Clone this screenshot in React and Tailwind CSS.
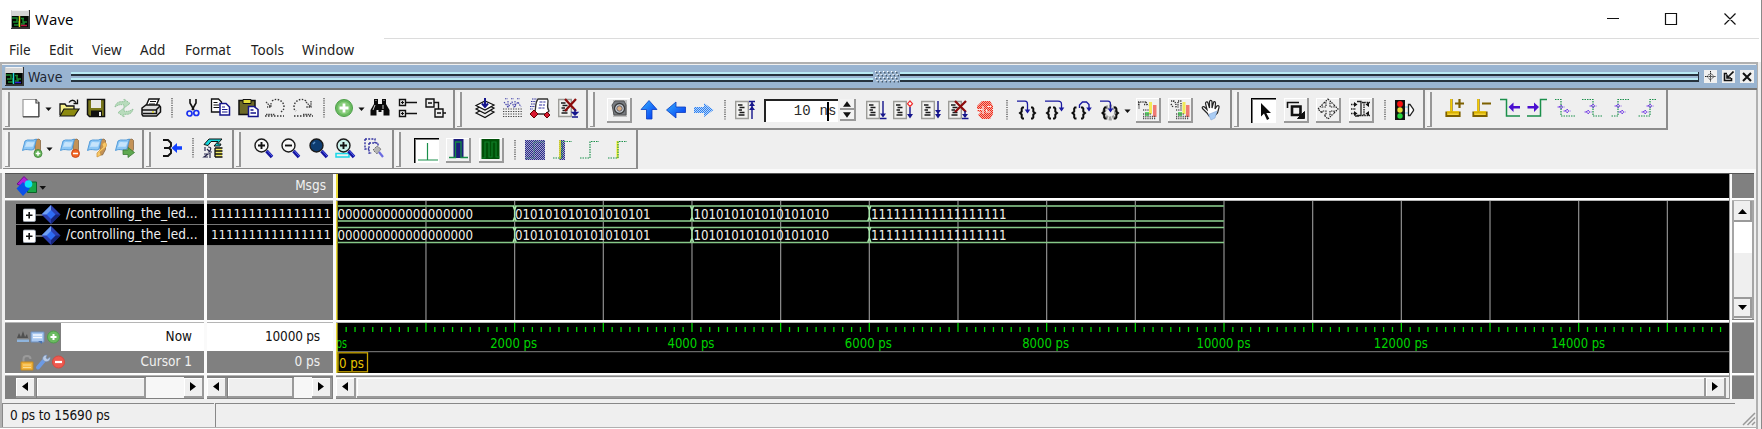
import React from "react";

/* ---------- primitives ---------- */

function Ico({ children }) {
  return (
    <span className="flex w-[27.5px] shrink-0 justify-center">
      <svg width="20" height="20" viewBox="0 0 20 20" fill="none" className="overflow-visible">
        {children}
      </svg>
    </span>
  );
}

function Btn({ children, pressed = false, narrow = false }) {
  return (
    <span className={narrow ? "flex w-[31px] shrink-0 justify-center" : "flex w-[32.5px] shrink-0 justify-center"}>
      <span
        className={
          pressed
            ? "flex h-[25px] w-[25px] items-center justify-center border-l border-t border-black bg-white shadow-[inset_1px_1px_0_#777]"
            : "flex h-[25px] w-[25px] items-center justify-center border-b-2 border-r-2 border-[#9a9a9a] bg-[#f0f0f0] shadow-[inset_1px_1px_0_#fff]"
        }
      >
        <svg width="20" height="20" viewBox="0 0 20 20" fill="none" className="overflow-visible">
          {children}
        </svg>
      </span>
    </span>
  );
}

function Sep() {
  return (
    <span className="flex w-[14px] shrink-0 justify-center">
      <svg width="2" height="20" viewBox="0 0 2 20">
        <path d="M1 0v20" stroke="#444" strokeWidth="1.200" strokeDasharray="1.200 1.100" />
      </svg>
    </span>
  );
}

function Drop({ wide = false }) {
  return (
    <span className={wide ? "flex w-[10.5px] shrink-0" : "flex w-[8.5px] shrink-0"}>
      <svg width="7" height="4.5" viewBox="0 0 8 5" className="mt-0.5">
        <path d="M0.5 0.5h7L4 4.5z" fill="#111" />
      </svg>
    </span>
  );
}

function Bar({ className, children }) {
  return (
    <div className={"flex h-[40px] shrink-0 items-start border-b-2 border-r-2 border-[#8c8c8c] bg-[#efefef] " + className}>
      <span className="ml-[2px] mt-[2px] h-[35px] w-[5px] shrink-0 border-b border-r-2 border-[#979797] bg-[#f5f5f5]" />
      {children}
    </div>
  );
}

function WaveLogo({ c = "#e0e020", d = "#c01040" }) {
  return (
    <svg width="19" height="19" viewBox="0 0 19 19" className="shrink-0">
      <rect width="19" height="19" fill="#333" />
      <rect width="18" height="6" fill="#d4d4d4" />
      <rect width="17" height="1" fill="#f4f4f4" />
      <path d="M0 0v18" stroke="#ccc" strokeWidth="1.500" />
      <rect x="1" y="6" width="16" height="11" fill="#020702" />
      <path d="M1 8h5v4H2M3 15h5v-4M10 8.500h3M12 8v4h4M10 14h3v-2" stroke="#188a30" strokeWidth="1.500" fill="none" />
      <path d="M8.500 6v11" stroke={c} strokeWidth="1.500" />
      <path d="M10 15.500h6" stroke={d} strokeWidth="1.500" />
    </svg>
  );
}

/* ---------- icon drawings ---------- */

const Page = () => (
  <>
    <path d="M.7 1.500h12.600v17H.7z" fill="#f2f2f0" stroke="#9c9c98" strokeWidth="1.400" />
    <path d="M3 5h4.500M4.500 7.500h5M3.500 10h3.500M4.500 12.500h5M3.500 15h6" stroke="#1a1a1a" strokeWidth="1.300" />
  </>
);

const BlueTag = ({ children }) => (
  <>
    <path d="M12.500 2l4.500-1 1.500 1.500v9l-3 5.500h-2z" fill="#c49256" stroke="#7b5b38" strokeWidth=".7" />
    <path d="M3 3c3-2.500 7 .5 11.500-2L12 11c-3 2.500-7-1-11.500 1.500z" fill="#8ec8f6" stroke="#4794d6" strokeWidth=".9" />
    <path d="M4.500 4.500c2.500-1.500 5 .5 8-.5l-1.500 4.500c-3 1-5-.5-8 .5z" fill="#c6e4fb" />
    {children}
  </>
);

const Lens = ({ fill = "#f7f7f7", children }) => (
  <>
    <path d="M12.500 13l5.500 6" stroke="#1414a0" strokeWidth="3.400" />
    <path d="M13.500 13l5 5.500" stroke="#5a6af0" strokeWidth="1" />
    <circle cx="7.500" cy="7.500" r="6.500" fill={fill} stroke="#1a1a1a" strokeWidth="1.400" />
    {children}
  </>
);

const Gates = ({ d, arrows }) => (
  <>
    <path d={d} stroke="#1b8f4b" strokeWidth="1.200" strokeDasharray="1.500 1" />
    {arrows.map(([x, y]) => (
      <path key={x + "-" + y} d={`M${x - 3.5} ${y}h7M${x} ${y - 2}l2 2-2 2-2-2z`} stroke="#7a45e6" strokeWidth="1" strokeDasharray="1.500 .6" />
    ))}
  </>
);

const OpenBrace = ({ x }) => (
  <path d={`M${x + 4} 7.500h-1.500l-.8 1v3l-1.700 1.500 1.700 1.500v3l.8 1h1.500`} stroke="#0c0c0c" strokeWidth="2" />
);
const CloseBrace = ({ x }) => (
  <path d={`M${x} 7.500h1.500l.8 1v3l1.700 1.500-1.700 1.500v3l-.8 1h-1.500`} stroke="#0c0c0c" strokeWidth="2" />
);

function Hatch() {
  return (
    <defs>
      <pattern id="navyHatch" width="2" height="2" patternUnits="userSpaceOnUse">
        <rect width="2" height="2" fill="#a4a4cc" />
        <rect width="1" height="1" fill="#2c2c88" />
        <rect x="1" y="1" width="1" height="1" fill="#2c2c88" />
      </pattern>
      <pattern id="blueHatch" width="2" height="2" patternUnits="userSpaceOnUse">
        <rect width="2" height="2" fill="#b4d4fa" />
        <rect width="1" height="1" fill="#2f80f0" />
        <rect x="1" y="1" width="1" height="1" fill="#2f80f0" />
      </pattern>
      <pattern id="redHatch" width="2" height="2" patternUnits="userSpaceOnUse">
        <rect width="2" height="2" fill="#f6aaa0" />
        <rect width="1" height="1" fill="#ee2a1a" />
        <rect x="1" y="1" width="1" height="1" fill="#ee2a1a" />
      </pattern>
      <pattern id="grayHatch" width="2" height="2" patternUnits="userSpaceOnUse">
        <rect width="1" height="1" fill="#555" />
        <rect x="1" y="1" width="1" height="1" fill="#555" />
      </pattern>
      <linearGradient id="arrowBlue" x1="0" y1="0" x2="1" y2="1">
        <stop offset="0" stopColor="#35b4ff" />
        <stop offset="1" stopColor="#0030f0" />
      </linearGradient>
    </defs>
  );
}

/* ---------- toolbars ---------- */

function FileBar() {
  return (
    <Bar className="w-[452px]">
      <div className="ml-[7px] flex h-[36px] items-center">
        <Ico>
          <path d="M2 1.500h13l3 3V18.500H2z" fill="#fff" stroke="#999" strokeWidth="1.200" />
          <path d="M15 1v4h3M17.800 4v15M2 18.800h16" stroke="#444" strokeWidth="1.200" />
        </Ico>
        <Drop wide />
        <Ico>
          <path d="M1 17V6h5l1.500 2H15v3" fill="#f6f08a" stroke="#111" strokeWidth="1.300" />
          <path d="M1 18l4-7h15l-4.500 7z" fill="#8c8a10" stroke="#111" strokeWidth="1.200" />
          <path d="M10 4.500c2-3 5-3 7 0M18.500 1.500v4h-4" stroke="#111" strokeWidth="1.300" />
        </Ico>
        <Ico>
          <path d="M1.500 1.500h17v17h-15l-2-2z" fill="#77751a" stroke="#111" strokeWidth="1.500" />
          <path d="M5 2h10v8H5z" fill="#e8e8e8" />
          <path d="M5 12.500h11v6H5z" fill="#111" />
          <path d="M13 14h2v4h-2z" fill="#eee" />
        </Ico>
        <Ico>
          <path d="M1 9c1-5 5-6 9-5V1l6 4.500L10 10V7C6 6 4 7 1 9zM19 11c-1 5-5 6-9 5v3l-6-4.500 6-4.500v3c4 1 6 0 9-2z" fill="#b8dcbc" stroke="#8fc098" strokeWidth="1" strokeDasharray="1.500 .8" />
        </Ico>
        <Ico>
          <path d="M5 8l3-7h10l-3 7z" fill="#fff" stroke="#111" strokeWidth="1.400" />
          <path d="M9 3.500h6M8 6h6" stroke="#111" strokeWidth="1.200" />
          <path d="M1 10l4-3h13l1.500 2v5l-4 4H2l-1-1.500z" fill="#ddd" stroke="#111" strokeWidth="1.500" />
          <path d="M1 12h14l4-4M2 15.500h13.500v-4" stroke="#111" strokeWidth="1.500" />
          <path d="M11 14h2" stroke="#d8d020" strokeWidth="1.300" />
        </Ico>
        <Sep />
        <Ico>
          <path d="M7 1v4l4 7M13 1v4L9 12" stroke="#111" strokeWidth="1.600" />
          <circle cx="6.500" cy="15.500" r="2.500" stroke="#1a30f0" strokeWidth="1.700" />
          <circle cx="13.300" cy="15" r="2.500" stroke="#1a30f0" strokeWidth="1.700" />
        </Ico>
        <Ico>
          <path d="M1.500 1h7l3 3v10h-10z" fill="#fff" stroke="#111" strokeWidth="1.300" />
          <path d="M3.500 4.500h4M3.500 7h6M3.500 9.500h6" stroke="#111" strokeWidth="1.200" />
          <path d="M10 5.500h6l3.500 3.500v8H10z" fill="#fff" stroke="#15158c" strokeWidth="1.500" />
          <path d="M12 9h3M12 11.500h5.500M12 14h5.500" stroke="#15158c" strokeWidth="1.200" />
        </Ico>
        <Ico>
          <path d="M1 2.500h16v14H1z" fill="#6c6926" stroke="#111" strokeWidth="1.500" />
          <path d="M5 1.500h8v4H5z" fill="#e5df3c" stroke="#111" strokeWidth="1" />
          <path d="M10.500 8.500h5.500l4 3v7h-9.500z" fill="#fff" stroke="#15158c" strokeWidth="1.500" />
          <path d="M12.500 12h3M12.500 15h5.500" stroke="#15158c" strokeWidth="1.300" />
        </Ico>
        <Ico>
          <path d="M0 18h19M7 3C12-1 19 3 19 9c0 3-2 4-4 6" stroke="#333" strokeWidth="1.400" strokeDasharray="1.500 1.500" />
          <path d="M1 4l5 5M6 5v4H2M1 16.500h9" stroke="#444" strokeWidth="1.300" strokeDasharray="1.500 .8" />
        </Ico>
        <Ico>
          <path d="M1 18h19M13 3C8-1 1 3 1 9c0 3 1 3 2 4" stroke="#333" strokeWidth="1.400" strokeDasharray="1.500 1.500" />
          <path d="M18 3v6h-5M13 4l5 5M10 16.500h9" stroke="#444" strokeWidth="1.300" strokeDasharray="1.500 .8" />
        </Ico>
        <Sep />
        <Ico>
          <circle cx="10" cy="10" r="8.500" fill="#6bbb61" stroke="#4c9e48" />
          <circle cx="10" cy="10" r="6.200" fill="#87cc7a" />
          <path d="M10 5.500v9M5.500 10h9" stroke="#fff" strokeWidth="2.800" />
        </Ico>
        <Drop />
        <Ico>
          <path d="M4 1h4v5h4V1h4v5l3.500 6v5.500h-6V12h-2v2h-3v-2h-2v5.500h-6V12L4 6z" fill="#0a0a0a" />
          <path d="M5 7l-2 5M13 7v4M5.500 2.500h1M13.500 2.500h1" stroke="#ccc" strokeWidth="1" />
        </Ico>
        <Ico>
          <path d="M1.500 1.500h6v6h-6zM1.500 12.500h6v6h-6zM8 4.500h11M8 15.500h11" stroke="#111" strokeWidth="1.400" />
          <path d="M3 4.500h3M4.500 3v3M3 15.500h3M4.500 14v3" stroke="#111" strokeWidth="1.200" />
        </Ico>
        <Ico>
          <path d="M1 1h8v8H1zM9 4.500h4.500V11M10 11h8v8h-8zM18 15h3" stroke="#111" strokeWidth="1.400" />
          <path d="M3 5h4M12 15h4" stroke="#111" strokeWidth="1.400" />
        </Ico>
      </div>
    </Bar>
  );
}

function CompileBar() {
  return (
    <Bar className="w-[133px]">
      <div className="ml-[9.5px] flex h-[36px] items-center">
        <Ico>
          <path d="M1 15l9-5 9 4-9 5.500z" fill="#eee" stroke="#111" strokeWidth="1.200" />
          <path d="M1 11l9-5 9 4-9 5.500z" fill="#eee" stroke="#111" strokeWidth="1.200" />
          <path d="M1 7.500l9-4.500 9 4-9 5z" fill="#fff" stroke="#111" strokeWidth="1.200" />
          <path d="M10 0v8M7 5.500l3 3.500 3-3.500" stroke="#15158c" strokeWidth="2" />
        </Ico>
        <Ico>
          <path d="M0 11h20M0 13.500h20M0 16h20M0 18.500h20" stroke="#444" strokeWidth="1.200" strokeDasharray="1.300 1.200" />
          <path d="M2 .8h3M8 .8h3M14 .8h3M1 4l4 5 4-5 2 5 4-5 3 5M5 3v6M12 3v6" stroke="#3f3fa8" strokeWidth="1.100" strokeDasharray="1.500 1" />
        </Ico>
        <Ico>
          <path d="M2 1h5M1 3.500h5M1 6h4M0 8.500h5M0 11h3" stroke="#3030a0" strokeWidth="1" strokeDasharray="1.500 .8" />
          <path d="M8 1h9.500c2 3-2 7 1.500 12l-3 3H4c3-4 0-10 4-15z" fill="#fff" stroke="#333" strokeWidth="1.300" />
          <path d="M9.500 4h6M9 7h6M8.500 10h6" stroke="#3030a0" strokeWidth="1" strokeDasharray="3 .8" />
          <path d="M4 12l4 4-4 4-4-4zM17 14l3 3-3 3-3-3z" fill="#d81830" stroke="#600" />
        </Ico>
        <Ico>
          <Page />
          <path d="M7 1l11 12M18 1L7 13" stroke="#8c0c0c" strokeWidth="2.300" />
          <path d="M17 11v5M14.500 14.500h5L17 17zM14 19h6" stroke="#15158c" strokeWidth="1.500" />
        </Ico>
      </div>
    </Bar>
  );
}

function SimBar() {
  return (
    <Bar className="w-[644px]">
      <div className="ml-[9px] mt-[1px] flex h-[38px] items-center">
        <Btn narrow>
          <path d="M4 1h14v17H4z" fill="#c0c0c0" />
          <path d="M6 2h9l2 4v10H5L3 6z" fill="#777b80" stroke="#555" />
          <circle cx="10.500" cy="9.500" r="5" fill="#c5cdd3" stroke="#3a3a3a" strokeWidth="1.300" />
          <circle cx="10.500" cy="9.500" r="2.700" fill="#ddae80" stroke="#667" />
        </Btn>
        <Ico>
          <path d="M10 .5l8 9h-5V19H7.500V9.500H2z" fill="url(#arrowBlue)" stroke="#0a3cc0" strokeWidth=".8" />
        </Ico>
        <Ico>
          <path d="M.5 10L10 2v5h9.500v5.500H10V18z" fill="url(#arrowBlue)" stroke="#0a3cc0" strokeWidth=".8" />
        </Ico>
        <Ico>
          <path d="M19.500 10L10 3v4H0v6h10v4z" fill="url(#blueHatch)" />
        </Ico>
        <Sep />
        <Ico>
          <Page />
          <path d="M14 1.500h6M17 2v17" stroke="#15158c" strokeWidth="1.400" />
          <path d="M14 6l3-4 3 4zM14 10l3-4 3 4z" fill="#15158c" />
        </Ico>
        <div className="ml-[4.500px] flex h-[23px] w-[74px] items-center justify-end border-l-2 border-t-2 border-[#222] bg-white">
          <span className="whitespace-pre font-['Liberation_Mono',monospace] text-[14px] tracking-[0.2px] text-[#2a2a2a]">10 n</span>
          <span className="-mx-[1px] h-[19px] w-[2px] bg-black" />
          <span className="pr-[1px] font-['Liberation_Mono',monospace] text-[14px] text-[#2a2a2a]">s</span>
        </div>
        <div className="ml-[2px] flex w-[16px] flex-col">
          <span className="flex h-[11px] items-center justify-center border-b-2 border-r-2 border-[#999] bg-[#f3f3f3]">
            <svg width="8" height="6" viewBox="0 0 9 6"><path d="M0 6l4.500-6L9 6z" fill="#111" /></svg>
          </span>
          <span className="flex h-[11px] items-center justify-center border-b-2 border-r-2 border-[#999] bg-[#f3f3f3]">
            <svg width="8" height="6" viewBox="0 0 9 6"><path d="M0 0l4.500 6L9 0z" fill="#111" /></svg>
          </span>
        </div>
        <span className="w-[6.500px]" />
        <Ico>
          <Page />
          <path d="M17 1v15M14 18.500h6.500" stroke="#15158c" strokeWidth="1.400" />
          <path d="M14 13.500h6L17 17.500z" fill="#15158c" />
        </Ico>
        <Ico>
          <Page />
          <path d="M17 7v9" stroke="#15158c" strokeWidth="1.400" />
          <path d="M14 14h6l-3 4.500z" fill="#15158c" />
          <path d="M17 1l2.500 2.700L17 6.500l-2.500-2.800z" stroke="#f03030" fill="#fff" strokeWidth="1.200" />
        </Ico>
        <Ico>
          <Page />
          <path d="M17 1v16" stroke="#15158c" strokeWidth="1.400" />
          <path d="M14 10h6l-3 4zM14 14h6l-3 4.500z" fill="#15158c" />
        </Ico>
        <Ico>
          <Page />
          <path d="M7 1l11 11M18 1L7 12" stroke="#8c0c0c" strokeWidth="2.300" />
          <path d="M17 11v6M14 18.500h6.500" stroke="#15158c" strokeWidth="1.400" />
          <path d="M14 14h6l-3 4z" fill="#15158c" />
        </Ico>
        <Ico>
          <path d="M6 1h8l3 5v8l-3 5H6l-4-4 3-3-4-1V6z" fill="url(#redHatch)" />
          <path d="M1 9.500h5M7 6v8M11 6.500h4M10.500 9v3h4M16 9.500h2" stroke="#fbe9e7" strokeWidth="1.200" />
        </Ico>
        <Sep />
        <Ico>
          <OpenBrace x={3} />
          <CloseBrace x={14} />
          <path d="M0 1.200h8c2 0 2.500 1 2.500 3V12" stroke="#1a1aa0" strokeWidth="1.300" />
          <path d="M7.700 9.500h5.600L10.500 13.500z" fill="#1a1aa0" />
        </Ico>
        <Ico>
          <OpenBrace x={2} />
          <CloseBrace x={8} />
          <path d="M0 1.200h13c2.500 0 3.500 1 3.500 3V9" stroke="#1a1aa0" strokeWidth="1.300" />
          <path d="M13.700 7.500h5.600L16.500 11.500z" fill="#1a1aa0" />
        </Ico>
        <Ico>
          <OpenBrace x={.5} />
          <CloseBrace x={9} />
          <path d="M7.500 8V5l3-3h4L17 4.500V9" stroke="#1a1aa0" strokeWidth="1.400" />
          <path d="M14.200 7.500h5.600L17 11.500z" fill="#1a1aa0" />
        </Ico>
        <Ico>
          <circle cx="10" cy="12.500" r="6" stroke="#a2a2a2" strokeWidth="4" strokeDasharray="2.800 1" />
          <OpenBrace x={2.500} />
          <CloseBrace x={14} />
          <path d="M0 1.200h8c2 0 2.500 1 2.500 3V11" stroke="#1a1aa0" strokeWidth="1.300" />
          <path d="M7.700 8.500h5.600L10.500 12.500z" fill="#1a1aa0" />
        </Ico>
        <Drop />
        <Btn>
          <path d="M1 3h8M1 5.500h2M7 5.500h3M2 3v7M9 3l2 4" stroke="#333" strokeWidth="1.400" strokeDasharray="1.200 1" />
          <path d="M12 3h3v12h-3z" fill="#f2ea58" />
          <path d="M16 6h3.500v12H16z" fill="#f07a72" />
          <path d="M8 13h4v4H8z" fill="#60e070" />
          <path d="M6 11h6M6 15h8M6 17.500h13M6 19.500h13" stroke="#555" strokeWidth="1.300" strokeDasharray="1.200 1" />
        </Btn>
        <Btn>
          <path d="M1 2h4M8 2h4M3 2c3 1 3 3 3 7M8 3v6M1 5l2 3M11 4v6" stroke="#333" strokeWidth="1.400" strokeDasharray="1.200 1" />
          <path d="M12.500 3h3v12h-3z" fill="#f2ea58" />
          <path d="M16 6h3.500v12H16z" fill="#f07a72" />
          <path d="M8 13h4v4H8z" fill="#60e070" />
          <path d="M6 11h6M6 15h8M6 17.500h13M6 19.500h13" stroke="#555" strokeWidth="1.300" strokeDasharray="1.200 1" />
        </Btn>
        <Ico>
          <path d="M6 13L1.500 8.500c-1-1.500 1-2.500 2-1.500L6 9.500 4.500 3.500c0-2 2-2 2.500-.5L8.500 8V1.500c.5-1.500 2-1.500 2.500 0V8L12.500 2.500c.5-1.500 2-1 2 .5L14 9l2-3c1-1 2.500 0 2 1.500L16.500 13l-3 3H8z" fill="#fff" stroke="#222" strokeWidth="1.200" />
          <path d="M7.500 14.500L16 11l-2 7-4 2z" fill="#aacdf5" stroke="#88a8d5" strokeWidth=".6" />
        </Ico>
      </div>
    </Bar>
  );
}

function ModeBar() {
  return (
    <Bar className="w-[193px]">
      <div className="ml-[8.500px] mt-[1px] flex h-[38px] items-center">
        <Btn pressed>
          <path d="M7 2v13.500l3-3 3 6.500 2.300-1.200-3-5.800H17z" fill="#0a0a0a" />
        </Btn>
        <Btn>
          <path d="M2.500 9V3.500H14" stroke="#111" strokeWidth="1.600" />
          <path d="M7 7.500h8.500v8.500H7z" stroke="#111" strokeWidth="2.600" />
          <path d="M14 14l4 4M19.500 12.500v7h-7z" stroke="#111" fill="#111" strokeWidth="1" />
        </Btn>
        <Btn>
          <path d="M10 0l4 4h-2v4h4V6l4 4-4 4v-2h-4v4h2l-4 4-4-4h2v-4H4v2l-4-4 4-4v2h4V4H6z" stroke="#222" strokeWidth="1.200" strokeDasharray="1.500 1" />
        </Btn>
        <Btn>
          <path d="M7 2.500h4v14H7M9 17h-4" stroke="#222" strokeWidth="1.300" />
          <path d="M1 5.500h5M1 10h5M1 14.500h5M14 3v14M12 3.500h8M12 16.500h8" stroke="#222" strokeWidth="1.400" strokeDasharray="1.500 .8" />
          <path d="M4 3l3.500 2.500L4 8zM4 12l3.500 2.500L4 17zM19 3l-3.500 2.500L19 8zM19 12l-3.500 2.500L19 17z" fill="#111" />
        </Btn>
        <Sep />
        <Ico>
          <path d="M0 0h10v20H0z" fill="#111" />
          <circle cx="5" cy="4" r="2.900" fill="#fb0f0f" />
          <circle cx="5" cy="10" r="2.700" fill="#e6d83a" />
          <circle cx="5" cy="16" r="2.700" fill="#22d43c" />
          <path d="M10 7h3M10 13h3" stroke="#74c2ea" />
          <path d="M13.500 4.500h1.500l3.500 5v1l-3.500 5h-1.500z" fill="#fff" stroke="#222" strokeWidth="1.300" />
        </Ico>
      </div>
    </Bar>
  );
}

function EdgeBar() {
  return (
    <Bar className="w-[243px]">
      <div className="ml-[9px] flex h-[36px] items-center">
        <Ico>
          <path d="M6.500 1v13M1.500 14.500h13v3.500h-13zM10 5.500h9M14.500 1v9" stroke="#7d6000" strokeWidth="2.200" />
          <path d="M6.200 1v12M2 14h12M2 16h12" stroke="#f6cc00" strokeWidth="1.600" />
        </Ico>
        <Ico>
          <path d="M6.500 1v13M1.500 14.500h13v3.500h-13zM10 5.500h9" stroke="#7d6000" strokeWidth="2.200" />
          <path d="M6.200 1v12M2 14h12M2 16h12" stroke="#f6cc00" strokeWidth="1.600" />
        </Ico>
        <Ico>
          <path d="M0 1.500h6.500V18H20" stroke="#1b8f4b" strokeWidth="1.500" />
          <path d="M8.500 9l5-4.500V8H20v2.500h-6.500V14z" fill="#4a0fd0" />
        </Ico>
        <Ico>
          <path d="M20 1.500h-6.500V18H0" stroke="#1b8f4b" strokeWidth="1.500" />
          <path d="M12 9L7 4.500V8H.5v2.500H7V14z" fill="#4a0fd0" />
        </Ico>
        <Ico>
          <Gates d="M0 1.500h6V18h14" arrows={[[6, 9], [12, 13]]} />
        </Ico>
        <Ico>
          <Gates d="M0 1.500h11V18h10" arrows={[[11, 8], [6, 14]]} />
        </Ico>
        <Ico>
          <Gates d="M19 1.500H8V18H1" arrows={[[8, 8], [12, 14]]} />
        </Ico>
        <Ico>
          <Gates d="M19 1.500h-6V18H1" arrows={[[13, 8], [8, 14]]} />
        </Ico>
      </div>
    </Bar>
  );
}

function BookmarkBar() {
  return (
    <Bar className="w-[141px]">
      <div className="ml-[8px] flex h-[36px] items-center">
        <Ico>
          <BlueTag>
            <circle cx="16" cy="15.500" r="4" fill="#65b558" stroke="#3d8038" strokeWidth=".8" />
            <path d="M16 13.200v4.600M13.700 15.500h4.600" stroke="#fff" strokeWidth="1.500" />
          </BlueTag>
        </Ico>
        <Drop wide />
        <Ico>
          <BlueTag>
            <circle cx="15.500" cy="15.500" r="4" fill="#f26522" stroke="#c03c10" strokeWidth=".8" />
            <path d="M13 15.500h5" stroke="#fff" strokeWidth="1.500" />
          </BlueTag>
        </Ico>
        <Ico>
          <BlueTag>
            <path d="M18 4c2 2 2 4 0 6l-5 4 1 3-4 2v-4l6-6-1-3z" fill="#f8c868" stroke="#d09840" strokeWidth=".8" />
          </BlueTag>
        </Ico>
        <Ico>
          <BlueTag>
            <path d="M8 12h5V9.500l6.500 5-6.500 5v-3H8z" fill="#5fa850" stroke="#3a7a35" strokeWidth=".8" />
          </BlueTag>
        </Ico>
      </div>
    </Bar>
  );
}

function CollapseBar() {
  return (
    <Bar className="w-[90px]">
      <div className="ml-[7px] flex h-[36px] items-center">
        <Ico>
          <path d="M1 2h5l3 3v3l-2 2 2 2v3l-3 3H1M2 10h5" stroke="#111" strokeWidth="1.900" />
          <path d="M9.500 10L15 5v3.300h5v3.400h-5V15z" fill="#1040ff" />
        </Ico>
        <Sep />
        <Ico>
          <path d="M1 6.500l5-5.500h13l-4.500 5h3.500L17 8h-6l4-4.500H8L5 7.500z" fill="#12d6dc" stroke="#111" strokeWidth="1" />
          <path d="M2 9v4M5 9c4 0 3 3 1 5h3M1 16h4l-4 3h4M7 15v5M4 11l3 3" stroke="#2a2a50" strokeWidth="1.200" />
          <path d="M12 10h7v9h-7z" fill="#efe860" />
          <path d="M12 10h7.500M12 13h7.500M12 16h7.500M12 19h7.500M12 10v9" stroke="#111" strokeWidth="1.300" />
        </Ico>
      </div>
    </Bar>
  );
}

function ZoomBar() {
  return (
    <Bar className="w-[160px]">
      <div className="ml-[9px] flex h-[36px] items-center">
        <Ico>
          <Lens>
            <path d="M4 7.500h7M7.500 4v7" stroke="#111" strokeWidth="1.900" />
          </Lens>
        </Ico>
        <Ico>
          <Lens>
            <path d="M4 7.500h7" stroke="#111" strokeWidth="1.900" />
          </Lens>
        </Ico>
        <Ico>
          <Lens fill="#0d3c70">
            <path d="M4 6l2-2" stroke="#5c90c5" strokeWidth="1.500" />
          </Lens>
        </Ico>
        <Ico>
          <path d="M0 15.500h13v3.500H0z" stroke="#18d8e8" strokeWidth="1.500" />
          <Lens fill="#c8f0ea">
            <path d="M4 7.500h7M7.500 4v7" stroke="#111" strokeWidth="1.900" />
          </Lens>
        </Ico>
        <Ico>
          <path d="M1 1h10v4M1 1v10h4M5 5h9v3M5 5v10h3" stroke="#3030a0" strokeWidth="1.400" strokeDasharray="2 1.200" />
          <path d="M9 12l4-4 4 3-4 5z" fill="#b5b5b5" stroke="#666" strokeDasharray="1.500 1" />
          <path d="M15 14l4 5" stroke="#6b6be0" strokeWidth="2.200" />
        </Ico>
      </div>
    </Bar>
  );
}

function ShapeBar() {
  return (
    <Bar className="w-[244px]">
      <div className="ml-[9px] mt-[1px] flex h-[38px] items-center">
        <Btn pressed>
          <path d="M10.500 2v17M1 19h20" stroke="#1b8f4b" strokeWidth="1.200" />
        </Btn>
        <Btn>
          <path d="M5.500 0h10v19h-10z" fill="#1d1d7c" />
          <path d="M1 18.500h6.500V3h5.500v15.500h7" stroke="#158a45" strokeWidth="1.300" />
        </Btn>
        <Btn>
          <path d="M1.500 0h18v20h-18z" fill="#005008" />
          <path d="M2 19h3V3h4v15h3V3h4v15h3.500" stroke="#0f8028" strokeWidth="1.200" />
        </Btn>
        <Sep />
        <Ico>
          <rect width="20" height="20" fill="url(#navyHatch)" />
          <path d="M1 18h8V2h10" stroke="#4a8a80" strokeWidth="1.200" strokeDasharray="1.500 1" />
        </Ico>
        <Ico>
          <rect x="6" width="6" height="20" fill="url(#navyHatch)" />
          <path d="M7 0v19" stroke="#f0f020" strokeWidth="1.500" />
          <path d="M0 18h9V1.500h10" stroke="#1b8f4b" strokeWidth="1.200" strokeDasharray="1.500 1" />
        </Ico>
        <Ico>
          <path d="M0 18h10V1.500h9" stroke="#1b8f4b" strokeWidth="1.200" strokeDasharray="1.500 1" />
        </Ico>
        <Ico>
          <path d="M9.500 1v17.500" stroke="#f0f020" strokeWidth="2" />
          <path d="M0 18h10V1.500h9" stroke="#1b8f4b" strokeWidth="1.200" strokeDasharray="1.500 1" />
        </Ico>
      </div>
    </Bar>
  );
}

/* ---------- wave window ---------- */

function SignalName() {
  return (
    <div className="ml-[11px] flex h-[21px] items-center border-b border-[#777] bg-black pl-[7px]">
      <svg width="38" height="19" viewBox="0 0 38 19" className="shrink-0">
        <path d="M12 10h8" stroke="#aaa" strokeWidth="1.300" />
        <rect x="0" y="4" width="12.500" height="12.500" rx="1.500" fill="#fff" stroke="#9aa4b4" strokeWidth=".8" />
        <path d="M3 10.300h6.500M6.200 7v6.600" stroke="#111" strokeWidth="1.600" />
        <path d="M28 0l9.500 9.500L28 19l-9.500-9.500z" fill="#2b3fb0" />
        <path d="M28 0v9.500h-9.500z" fill="#6fa0f4" />
        <path d="M28 19V9.500h9.500z" fill="#15247c" />
        <path d="M28 5l4.500 4.500L28 14l-4.500-4.500z" fill="#2d6cf6" />
      </svg>
      <span className="ml-[5px] whitespace-nowrap text-[13.500px] tracking-[0.05px] text-[#eee]">/controlling_the_led...</span>
    </div>
  );
}

function MsgValue() {
  return (
    <div className="flex h-[21px] items-center border-b border-[#777] bg-black pl-[4px]">
      <span className="whitespace-nowrap text-[13.100px] text-[#eee]">1111111111111111</span>
    </div>
  );
}

function ScrollArrow({ left = false }) {
  return (
    <span className="flex h-[20px] w-[20px] shrink-0 items-center justify-center border-b-2 border-r-2 border-[#9a9a9a] bg-[#efefef] shadow-[inset_1px_1px_0_#fff]">
      <svg width="6" height="9" viewBox="0 0 6 9">
        <path d={left ? "M6 0v9L0 4.500z" : "M0 0v9l6-4.500z"} fill="#000" />
      </svg>
    </span>
  );
}

const Thumb = ({ className }) => (
  <span className={"h-[20px] shrink-0 border-b-2 border-r-2 border-[#9a9a9a] bg-[#efefef] shadow-[inset_1px_1px_0_#fff] " + className} />
);

const Rule = () => <div className="h-[3px] shrink-0 border-b border-[#b5b5b5] bg-white" />;

const STEP = 88.67;
const X0 = 1.3;
const values = [
  ["000000000000000000", 1.5],
  ["010101010101010101", 179],
  ["101010101010101010", 357.5],
  ["111111111111111111", 535],
];

function Waves() {
  const grid = Array.from({ length: 15 }, (_, i) => X0 + (i + 1) * STEP);
  const end = X0 + 10 * STEP;
  return (
    <svg width="1393" height="119" viewBox="0 0 1393 119" className="shrink-0 bg-black">
      {grid.map((x) => (
        <path key={x} d={`M${x} 0V119`} stroke="#8f8f8f" strokeWidth="1.200" />
      ))}
      <path d={`M2 5H${end}M2 20H${end}`} stroke="#6da06f" strokeWidth="2" />
      <path d={`M2 26.500H${end}M2 41.500H${end}`} stroke="#86c888" strokeWidth="1.300" />
      {[1, 2, 3].map((k) => {
        const x = X0 + k * 2 * STEP;
        return (
          <g key={k} stroke="#a6e6a8" strokeWidth="1.500" fill="none">
            <path d={`M${x - 1.5} 5L${x} 9V16L${x - 1.5} 20M${x + 1.5} 5L${x} 9M${x} 16L${x + 1.5} 20`} />
            <path d={`M${x - 1.5} 26L${x} 30V37L${x - 1.5} 41M${x + 1.5} 26L${x} 30M${x} 37L${x + 1.5} 41`} />
          </g>
        );
      })}
      {values.map(([v, x]) =>
        [18, 39].map((y) => (
          <text key={v + y} x={x} y={y} textLength="135.500" lengthAdjust="spacingAndGlyphs" fontSize="13.500" fill="#f2f2ea">
            {v}
          </text>
        ))
      )}
      <path d="M.8 0V119" stroke="#e8d838" strokeWidth="1.600" />
    </svg>
  );
}

function TimeScale() {
  const ticks = Array.from({ length: 157 }, (_, i) => i + 1).filter((i) => X0 + (i * STEP) / 10 < 1391);
  return (
    <svg width="1393" height="50" viewBox="0 0 1393 50" className="shrink-0 bg-black">
      {ticks.map((i) => {
        const x = X0 + (i * STEP) / 10;
        return <path key={i} d={i % 10 === 0 ? `M${x} 0V9` : `M${x} 4V9`} stroke="#00d400" strokeWidth="1.300" />;
      })}
      <text x="0" y="24.500" fontSize="13.500" textLength="11" lengthAdjust="spacingAndGlyphs" fill="#00d400">ps</text>
      {[2, 4, 6, 8, 10, 12, 14].map((k) => (
        <text
          key={k}
          x={X0 + k * STEP - (k < 10 ? 1 : 0.5)}
          y="24.500"
          fontSize="13.500"
          textAnchor="middle"
          textLength={k < 10 ? 47 : 54}
          lengthAdjust="spacingAndGlyphs"
          fill="#00d400"
        >
          {`${k}000 ps`}
        </text>
      ))}
      <path d="M0 28.700H1393" stroke="#6a6a6a" strokeWidth="1.200" />
      <path d="M.8 0V50" stroke="#e8d838" strokeWidth="1.600" />
      <rect x="2" y="29.800" width="29.500" height="19" stroke="#c9a400" strokeWidth="1.300" fill="#000" />
      <text x="3" y="44.500" fontSize="13.500" textLength="25" lengthAdjust="spacingAndGlyphs" fill="#e8c400">0 ps</text>
    </svg>
  );
}

function WavePane() {
  return (
    <div className="ml-[5px] flex h-[226px] w-[1749px] border-t border-[#555]">
      {/* signal names */}
      <div className="flex w-[199px] shrink-0 flex-col bg-[#808080]">
        <div className="flex h-[24px] items-center pl-[11px]">
          <svg width="32" height="21" viewBox="0 0 32 21">
            <path d="M1 8l7-7.500 5 5-4 6z" fill="#b020d8" stroke="#700890" />
            <path d="M12 6h8.500v10.500h-9z" fill="#18a848" stroke="#0c6028" />
            <path d="M7 6l7 6.500-7 7.500-6.500-7.500z" fill="#0a50e8" />
            <circle cx="12.500" cy="8" r="3.800" fill="#10e0f8" />
            <path d="M23.500 10h6.500l-3.200 3.700z" fill="#111" />
          </svg>
        </div>
        <Rule />
        <div className="flex h-[119px] flex-col pt-[3px]">
          <SignalName />
          <SignalName />
        </div>
        <Rule />
        <div className="flex h-[28px] items-center bg-[#808080]">
          <svg width="44" height="16" viewBox="0 0 44 16" className="ml-[11px] shrink-0">
            <path d="M1 9l2-5 2 4 2-6 2 6 2-3 1 4z" fill="#505050" />
            <path d="M1 10.500h12v2.500H1z" fill="#8fb4dc" />
            <path d="M15 3h13v10H15z" fill="#a9c8f0" stroke="#6c90c0" />
            <path d="M17 6h9M17 8.500h9" stroke="#f5f9ff" strokeWidth="1.300" />
            <path d="M22 12l4 3v-3z" fill="#4a72b0" />
            <circle cx="37.500" cy="8" r="6" fill="#6bbb61" stroke="#4c9e48" />
            <path d="M37.500 5v6M34.500 8h6" stroke="#fff" strokeWidth="2" />
          </svg>
          <span className="ml-[1px] flex h-[28px] flex-1 items-center justify-end bg-white pr-[12px] text-[13.500px]">Now</span>
        </div>
        <div className="flex h-[22px] items-center">
          <svg width="46" height="17" viewBox="0 0 46 17" className="ml-[15px] shrink-0">
            <path d="M3.500 8V5c0-4 7-4 7 0" stroke="#9a9a9a" strokeWidth="2" fill="none" />
            <path d="M1 8h12v8H1z" fill="#f4b53f" stroke="#c48a20" />
            <path d="M3 11h8M3 13.500h8" stroke="#fbdc90" />
            <path d="M18 13.500l6-7" stroke="#6c9ae4" strokeWidth="4" strokeLinecap="round" />
            <path d="M23 6c-1-3 1-5 4-5l-1 3 1.500 1 2.500-2c1 3-2 5.500-5 4.500z" fill="#b9cbe6" stroke="#6f8ab4" strokeWidth=".6" />
            <circle cx="38.500" cy="8" r="6" fill="#ee5a50" stroke="#d8483e" />
            <path d="M35 8h7" stroke="#fff" strokeWidth="2.200" />
          </svg>
          <span className="flex-1 pr-[12px] text-right text-[13.500px] text-[#f0f0f0]">Cursor 1</span>
        </div>
        <Rule />
        <div className="flex h-[23px] items-center pl-[11px]">
          <ScrollArrow left />
          <Thumb className="ml-[1px] w-[109px]" />
          <span className="h-[21px] w-[38px] bg-[#f7f7f7]" />
          <ScrollArrow />
        </div>
      </div>

      <div className="w-[3px] shrink-0 bg-[#fafafa]" />

      {/* values */}
      <div className="flex w-[126px] shrink-0 flex-col bg-[#808080]">
        <div className="flex h-[24px] items-center justify-end pr-[7px] text-[13.500px] text-[#f0f0f0]">Msgs</div>
        <Rule />
        <div className="flex h-[119px] flex-col pt-[3px]">
          <MsgValue />
          <MsgValue />
        </div>
        <Rule />
        <div className="flex h-[28px] items-center justify-end bg-white pr-[13px] text-[13.500px] tracking-[-0.2px]">10000 ps</div>
        <div className="flex h-[22px] items-center justify-end pr-[13px] text-[13.500px] text-[#f0f0f0]">0 ps</div>
        <Rule />
        <div className="flex h-[23px] items-center">
          <ScrollArrow left />
          <Thumb className="ml-[1px] w-[66px]" />
          <span className="h-[21px] w-[18px] bg-[#f7f7f7]" />
          <ScrollArrow />
        </div>
      </div>

      <div className="w-[3px] shrink-0 bg-[#fafafa]" />

      {/* waveforms */}
      <div className="flex w-[1393px] shrink-0 flex-col">
        <div className="h-[24px] shrink-0 border-l-2 border-[#e8d838] bg-black" />
        <Rule />
        <Waves />
        <Rule />
        <TimeScale />
        <Rule />
        <div className="flex h-[23px] shrink-0 items-center border-b border-t border-[#888] bg-[#efefef]">
          <ScrollArrow left />
          <Thumb className="ml-[1px] w-[1349px]" />
          <ScrollArrow />
        </div>
      </div>

      <div className="w-[3px] shrink-0 border-l border-[#999] bg-[#fafafa]" />

      {/* vertical scroll */}
      <div className="flex w-[22px] shrink-0 flex-col bg-[#808080]">
        <div className="h-[24px] shrink-0" />
        <Rule />
        <div className="flex h-[118px] shrink-0 flex-col border-l-2 border-r-2 border-[#a5a5a5] bg-[#efefef]">
          <span className="flex h-[21px] items-center justify-center border-b-2 border-r-2 border-[#9a9a9a] bg-[#efefef] pt-[2px]">
            <svg width="9" height="5" viewBox="0 0 9 5"><path d="M0 5l4.500-5L9 5z" fill="#000" /></svg>
          </span>
          <span className="h-[31px] bg-white" />
          <span className="h-[46px] border-b-2 border-[#9a9a9a] bg-[#efefef]" />
          <span className="flex h-[19px] items-center justify-center border-b-2 border-r-2 border-[#9a9a9a] bg-[#efefef]">
            <svg width="9" height="5" viewBox="0 0 9 5"><path d="M0 0l4.500 5L9 0z" fill="#000" /></svg>
          </span>
        </div>
        <div className="h-[1px] shrink-0 bg-[#808080]" />
        <Rule />
        <div className="h-[50px] shrink-0" />
        <Rule />
        <div className="h-[23px] shrink-0" />
      </div>
    </div>
  );
}

const Stripe = ({ className }) => (
  <span className={"flex h-[10px] flex-col gap-[2px] " + className}>
    <span className="h-[4px] border-b-2 border-t-2 border-b-[#26323e] border-t-[#b8eaf4]" />
    <span className="h-[4px] border-b-2 border-t-2 border-b-[#26323e] border-t-[#b8eaf4]" />
  </span>
);

function DockHeader() {
  return (
    <div className="ml-[2px] flex h-[25px] w-[1755px] shrink-0 items-center border-b-2 border-b-[#777] bg-[#99b4d1] pl-[3px]">
      <WaveLogo c="#20d8d8" d="#3020d0" />
      <span className="ml-[4px] w-[43px] text-[14px] text-[#1c2430]">Wave</span>
      <Stripe className="w-[802px]" />
      <svg width="27" height="12" viewBox="0 0 27 12" className="shrink-0">
        {[0, 1, 2, 3].map((r) =>
          [0, 1, 2, 3, 4, 5].map((k) => (
            <g key={r + "-" + k}>
              <rect x={2 + k * 4 + (r % 2) * 1.5} y={r * 3} width="1.200" height="1.200" fill="#fff" />
              <rect x={3.2 + k * 4 + (r % 2) * 1.5} y={r * 3 + 1.2} width="1.200" height="1.200" fill="#26323e" />
            </g>
          ))
        )}
      </svg>
      <Stripe className="w-[799px] border-r border-[#26323e]" />
      <span className="ml-[5px] flex h-[13px] w-[13px] items-center justify-center bg-[#f0f0f0]">
        <svg width="11" height="11" viewBox="0 0 11 11" fill="none"><path d="M5.500 0v11M0 5.500h11M2 5.500L5.500 2 9 5.500 5.500 9z" stroke="#222" strokeDasharray="1.300 .8" /></svg>
      </span>
      <span className="ml-[5px] flex h-[13px] w-[13px] items-center justify-center bg-[#f0f0f0]">
        <svg width="11" height="11" viewBox="0 0 11 11" fill="none"><path d="M4 2.500H1.500v7h7V7M10.500.5L5 6M4 3.500V7h4" stroke="#111" strokeWidth="1.600" /></svg>
      </span>
      <span className="ml-[5px] flex h-[13px] w-[14px] items-center justify-center bg-[#f0f0f0]">
        <svg width="10" height="10" viewBox="0 0 10 10"><path d="M1 1l8 8M9 1L1 9" stroke="#111" strokeWidth="2" /></svg>
      </span>
    </div>
  );
}

export default function App() {
  return (
    <div className="flex h-[429px] w-[1762px] flex-col overflow-hidden border-r border-[#8a8a8a] bg-[#efefef] font-['DejaVu_Sans_Condensed','DejaVu_Sans',sans-serif] leading-none text-[#111] [font-stretch:condensed]">
      <svg width="0" height="0" className="absolute"><Hatch /></svg>

      {/* window title */}
      <div className="flex h-[38px] shrink-0 items-center bg-white pl-[11px]">
        <WaveLogo />
        <span className="ml-[5px] font-['Open_Sans','Noto_Sans',sans-serif] text-[15px] tracking-[0.1px] text-black [font-stretch:normal]">Wave</span>
        <span className="flex-1" />
        <svg width="130" height="14" viewBox="0 0 130 14" fill="none" stroke="#111" className="mr-[24px]">
          <path d="M0 6.500h12M58.500 1.500h11v11h-11zM117.500 1.500l11 11M128.500 1.500l-11 11" strokeWidth="1.200" />
        </svg>
      </div>

      {/* menu */}
      <div className="flex h-[24px] shrink-0 bg-white">
        <div className="flex w-[384px] items-center pl-[9px] pt-[1px] font-['Noto_Sans','Open_Sans',sans-serif] text-[13.500px] text-[#222] [font-stretch:normal]">
          <span className="w-[40px]">File</span>
          <span className="w-[43px]">Edit</span>
          <span className="w-[48px]">View</span>
          <span className="w-[45px]">Add</span>
          <span className="w-[66px]">Format</span>
          <span className="w-[51px]">Tools</span>
          <span className="tracking-[0.2px]">Window</span>
        </div>
        <div className="w-[1375px] border-t border-[#dcdcdc]" />
      </div>

      <div className="flex w-[1758px] flex-1 flex-col border-l-2 border-r-2 border-t-2 border-[#b0b0b0]">
        <div className="-ml-[2px] mt-[1px] flex flex-col">
          <DockHeader />
          <div className="ml-[3px] flex h-[39px]">
            <FileBar />
            <CompileBar />
            <SimBar />
            <ModeBar />
            <EdgeBar />
          </div>
          <div className="ml-[3px] flex h-[40px] pt-px">
            <BookmarkBar />
            <CollapseBar />
            <ZoomBar />
            <ShapeBar />
          </div>
          <div className="h-[4px] bg-[#fafafa]" />
          <WavePane />
          <div className="mt-[4px] flex h-[24px] shrink-0 pl-[2px]">
            <div className="flex w-[212px] items-center border-l border-t border-[#888] pl-[7px] text-[13.500px] tracking-[-0.15px]">0 ps to 15690 ps</div>
            <div className="ml-[1px] w-[1521px] border-l border-t border-[#888]" />
            <svg width="14" height="14" viewBox="0 0 14 14" className="ml-[7px] mt-[9px]">
              <path d="M1 13L13 1M5.500 13L13 5.500M10 13l3-3" stroke="#999" strokeWidth="1.500" />
            </svg>
          </div>
          <div className="h-[2px] shrink-0 border-t border-[#b0b0b0] bg-white" />
        </div>
      </div>
    </div>
  );
}
